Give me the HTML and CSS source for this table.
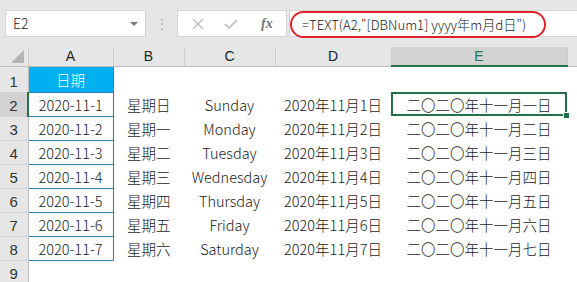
FILE: index.html
```html
<!DOCTYPE html>
<html lang="zh-CN">
<head>
  <meta charset="UTF-8">
  <title>TEXT DBNum1</title>
  <link rel="stylesheet" href="styles.css">
</head>
<body>
  <div class="toolbar">
    <div class="name-box">E2<span class="caret"></span></div>
    <div class="grip">&#8942;</div>
    <div class="fx-box">
      <svg width="14" height="14" viewBox="0 0 14 14" class="ico"><path d="M2 2 L12 12 M12 2 L2 12" stroke="#c4c4c4" stroke-width="1.6" fill="none"/></svg>
      <svg width="16" height="14" viewBox="0 0 16 14" class="ico"><path d="M2 7 L6 11 L14 3" stroke="#c4c4c4" stroke-width="1.8" fill="none"/></svg>
      <span class="fx">fx</span>
    </div>
    <div class="formula">
      <span class="ring">=TEXT(A2,"[DBNum1] yyyy年m月d日")</span>
    </div>
  </div>

  <table class="sheet">
    <colgroup>
      <col style="width:28px"><col style="width:85px"><col style="width:71px"><col style="width:91px"><col style="width:116px"><col style="width:176px"><col>
    </colgroup>
    <tr class="heads">
      <th class="corner"><span class="tri"></span></th>
      <th>A</th><th>B</th><th>C</th><th>D</th><th class="sel">E</th><th class="rest"></th>
    </tr>
    <tr class="r1">
      <th class="rn">1</th><td class="title">日期</td><td></td><td></td><td></td><td></td><td></td>
    </tr>
    <tr>
      <th class="rn sel">2</th><td class="date">2020-11-1</td><td>星期日</td><td>Sunday</td><td>2020年11月1日</td><td class="active">二〇二〇年十一月一日<span class="handle"></span></td><td></td>
    </tr>
    <tr>
      <th class="rn">3</th><td class="date">2020-11-2</td><td>星期一</td><td>Monday</td><td>2020年11月2日</td><td>二〇二〇年十一月二日</td><td></td>
    </tr>
    <tr>
      <th class="rn">4</th><td class="date">2020-11-3</td><td>星期二</td><td>Tuesday</td><td>2020年11月3日</td><td>二〇二〇年十一月三日</td><td></td>
    </tr>
    <tr>
      <th class="rn">5</th><td class="date">2020-11-4</td><td>星期三</td><td>Wednesday</td><td>2020年11月4日</td><td>二〇二〇年十一月四日</td><td></td>
    </tr>
    <tr>
      <th class="rn">6</th><td class="date">2020-11-5</td><td>星期四</td><td>Thursday</td><td>2020年11月5日</td><td>二〇二〇年十一月五日</td><td></td>
    </tr>
    <tr>
      <th class="rn">7</th><td class="date">2020-11-6</td><td>星期五</td><td>Friday</td><td>2020年11月6日</td><td>二〇二〇年十一月六日</td><td></td>
    </tr>
    <tr>
      <th class="rn">8</th><td class="date">2020-11-7</td><td>星期六</td><td>Saturday</td><td>2020年11月7日</td><td>二〇二〇年十一月七日</td><td></td>
    </tr>
    <tr>
      <th class="rn">9</th><td></td><td></td><td></td><td></td><td></td><td></td>
    </tr>
  </table>
</body>
</html>
```

FILE: styles.css
```css
body {
  margin: 0;
  width: 577px;
  height: 282px;
  overflow: hidden;
  background: #fff;
  font-family: "Noto Sans CJK SC", "Microsoft YaHei", sans-serif;
  font-weight: 300;
  color: #1a1a1a;
}
.toolbar {
  height: 47px;
  background: #e6e6e6;
  display: flex;
  align-items: flex-start;
  padding-top: 10px;
  box-sizing: border-box;
}
.name-box {
  margin-left: 5px;
  width: 141px;
  height: 27px;
  box-sizing: border-box;
  background: #fff;
  border: 1px solid #d4d4d4;
  font-size: 14px;
  line-height: 25px;
  padding-left: 7px;
  position: relative;
}
.caret {
  position: absolute;
  right: 7px;
  top: 11px;
  border-left: 4px solid transparent;
  border-right: 4px solid transparent;
  border-top: 4px solid #777;
}
.grip {
  width: 31px;
  text-align: center;
  color: #b5b5b5;
  font-size: 14px;
  line-height: 27px;
}
.fx-box {
  width: 110px;
  height: 27px;
  box-sizing: border-box;
  background: #fff;
  border: 1px solid #d4d4d4;
  display: flex;
  align-items: center;
  padding-left: 13px;
  gap: 18px;
}
.fx {
  font-family: "Liberation Serif", serif;
  font-style: italic;
  font-weight: bold;
  font-size: 14px;
  color: #777;
  margin-left: 4px;
}
.formula {
  flex: 1;
  height: 27px;
  box-sizing: border-box;
  background: #fff;
  border: 1px solid #d4d4d4;
  border-right: none;
  margin-left: 2px;
}
.ring {
  display: inline-block;
  width: 256px;
  height: 27px;
  box-sizing: border-box;
  margin: -1px 0 0 0;
  border: 2px solid #e0212b;
  border-radius: 14px;
  font-size: 13.2px;
  line-height: 23px;
  padding-left: 10px;
  white-space: nowrap;
  color: #222;
}
.sheet {
  border-collapse: collapse;
  table-layout: fixed;
  width: 577px;
}
.sheet th {
  font-weight: normal;
  padding: 0;
}
.heads th {
  height: 18px;
  background: #e6e6e6;
  border-bottom: 1px solid #bdbdbd;
  border-right: 1px solid #cdcdcd;
  font-size: 14px;
  line-height: 18px;
  color: #222;
  font-family: "Liberation Sans", sans-serif;
}
.heads th.sel {
  background: #d2d2d2;
  color: #217346;
  border-bottom: 2px solid #217346;
}
.heads th.rest {
  border-right: none;
}
.corner {
  position: relative;
}
.tri {
  position: absolute;
  right: 4px;
  bottom: 3px;
  border-left: 13px solid transparent;
  border-bottom: 13px solid #b4b4b4;
}
th.rn {
  background: #e6e6e6;
  border-right: 1px solid #bdbdbd;
  border-bottom: 1px solid #d2d2d2;
  font-family: "Liberation Sans", sans-serif;
  font-size: 15px;
  color: #333;
  vertical-align: middle;
  line-height: 18px;
  padding-top: 4px;
}
th.rn.sel {
  background: #d2d2d2;
  border-right: 2px solid #217346;
}
.sheet td {
  height: 23px;
  padding: 0;
  text-align: center;
  font-size: 14.5px;
  white-space: nowrap;
  overflow: visible;
}
.r1 td, .r1 th {
  height: 21px;
}
.r1 th.rn {
  line-height: 17px;
}
td.title {
  background: #00b0f0;
  color: #fff;
  border: 1px solid #2f7fb5;
}
td.date {
  border: 1px solid #2f7fb5;
}
td.active {
  outline: 2px solid #217346;
  outline-offset: -2px;
  position: relative;
}
.handle {
  position: absolute;
  right: -3px;
  bottom: -3px;
  width: 5px;
  height: 5px;
  background: #217346;
  border: 1px solid #fff;
}
```
